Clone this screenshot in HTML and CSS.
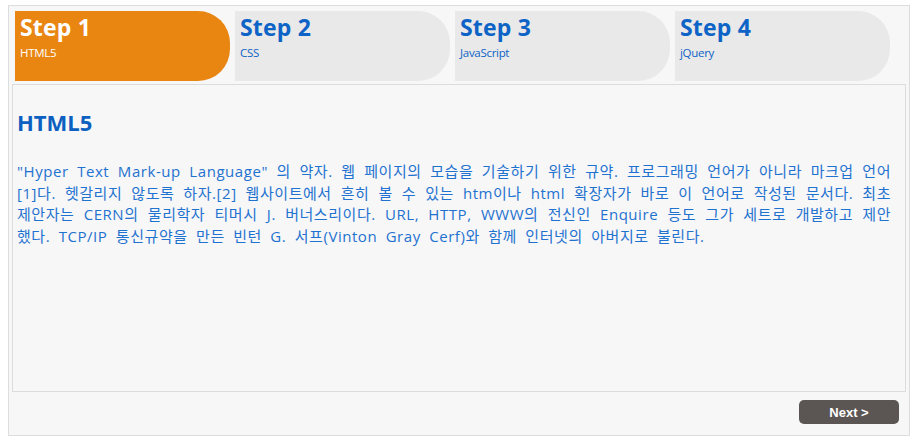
FILE: index.html
```html
<!DOCTYPE html>
<html lang="ko">
<head>
<meta charset="utf-8">
<title>Wizard</title>
<link rel="stylesheet" href="styles.css">
</head>
<body>
<div class="wizard">
  <ul class="steps">
    <li class="step current"><span class="step-title">Step 1</span><span class="step-sub">HTML5</span></li>
    <li class="step"><span class="step-title">Step 2</span><span class="step-sub">CSS</span></li>
    <li class="step"><span class="step-title">Step 3</span><span class="step-sub">JavaScript</span></li>
    <li class="step"><span class="step-title">Step 4</span><span class="step-sub">jQuery</span></li>
  </ul>
  <div class="panel">
    <h2 class="panel-title">HTML5</h2>
    <p class="panel-text">"Hyper Text Mark-up Language" 의 약자. 웹 페이지의 모습을 기술하기 위한 규약. 프로그래밍 언어가 아니라 마크업 언어[1]다. 헷갈리지 않도록 하자.[2] 웹사이트에서 흔히 볼 수 있는 htm이나 html 확장자가 바로 이 언어로 작성된 문서다. 최초 제안자는 CERN의 물리학자 티머시 J. 버너스리이다. URL, HTTP, WWW의 전신인 Enquire 등도 그가 세트로 개발하고 제안했다. TCP/IP 통신규약을 만든 빈턴 G. 서프(Vinton Gray Cerf)와 함께 인터넷의 아버지로 불린다.</p>
  </div>
  <div class="actions">
    <button class="btn-next" type="button">Next &gt;</button>
  </div>
</div>
</body>
</html>
```
FILE: styles.css
```css
html, body {
  margin: 0;
  padding: 0;
  background: #ffffff;
}
body {
  padding: 5px 8px;
  font-family: "Open Sans", "Noto Sans CJK KR", sans-serif;
}
.wizard {
  box-sizing: border-box;
  width: 902px;
  height: 431px;
  border: 1px solid #dddddd;
  background: #f7f7f7;
  padding: 5px 3px 0;
}
.steps {
  list-style: none;
  margin: 0 0 0 3px;
  padding: 0;
  display: flex;
  gap: 5px;
  height: 70px;
}
.step {
  box-sizing: border-box;
  width: 215px;
  height: 70px;
  background: #e9e9e9;
  border-radius: 0 32px 32px 0;
  padding: 0 5px;
  display: flex;
  flex-direction: column;
  color: #0d63c6;
}
.step.current {
  background: #e98612;
  color: #ffffff;
}
.step-title {
  font-size: 23px;
  font-weight: 700;
  line-height: 33px;
  letter-spacing: 0.2px;
}
.step-sub {
  margin-top: 1px;
  font-size: 11.5px;
  line-height: 15px;
  letter-spacing: -0.3px;
}
.panel {
  box-sizing: border-box;
  margin-top: 3px;
  height: 308px;
  border: 1px solid #dddddd;
  background: #f7f7f7;
  padding: 0 14px 0 4px;
}
.panel-title {
  margin: 20px 0 0;
  font-size: 22px;
  font-weight: 700;
  line-height: 34px;
  color: #0d5fc0;
}
.panel-text {
  margin: 22px 0 0;
  font-size: 15px;
  line-height: 21.6px;
  letter-spacing: 0.55px;
  word-spacing: 4px;
  color: #1f72d0;
  text-align: justify;
}
.actions {
  display: flex;
  justify-content: flex-end;
  padding: 8px 7px 0 0;
}
.btn-next {
  width: 100px;
  height: 24px;
  border: none;
  border-radius: 5px;
  background: #5b5654;
  color: #ffffff;
  font-family: "Liberation Sans", Arial, sans-serif;
  font-size: 13px;
  font-weight: 700;
  padding: 0;
}
```
